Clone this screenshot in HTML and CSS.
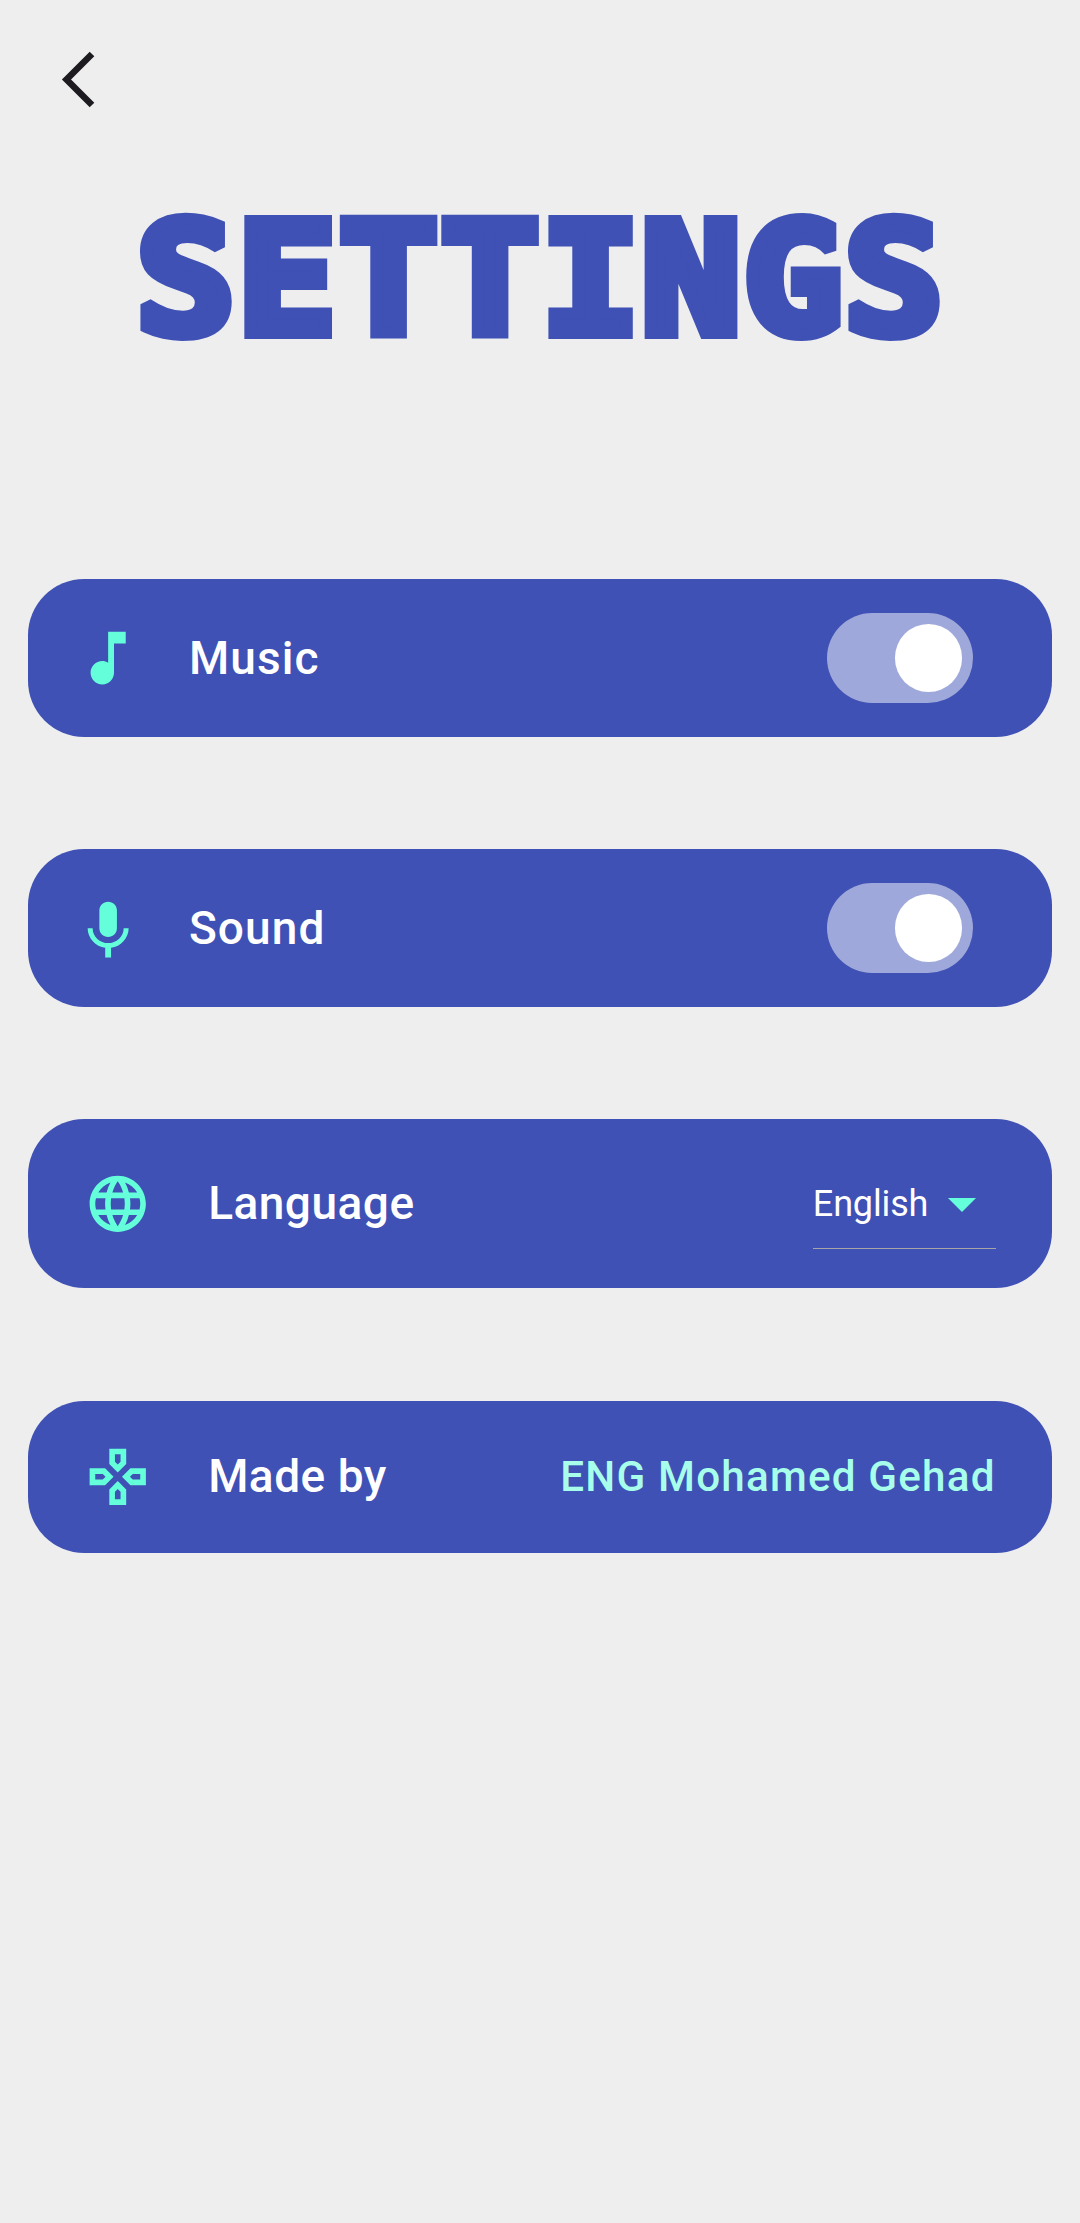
FILE: index.html
```html
<!DOCTYPE html>
<html lang="en">
<head>
<meta charset="utf-8">
<title>Settings</title>
<link rel="stylesheet" href="styles.css">
</head>
<body>
<header class="topbar">
  <svg class="back" viewBox="0 0 34 58" aria-label="Back"><path d="M31 3 5.500 28.500 31 54" /></svg>
</header>
<h1 class="title">
  <svg class="title-art" viewBox="0 0 1080 182"><text transform="scale(1.07 1)" x="173.400 268.200 363.100 458 552 646 741 835.200" y="175">SETTINGS</text></svg>
</h1>
<main class="list">
  <section class="card card-toggle">
    <svg class="icon" viewBox="0 0 24 24"><path d="M12 3v10.550c-.59-.34-1.270-.55-2-.55-2.210 0-4 1.790-4 4s1.790 4 4 4 4-1.790 4-4V7h4V3h-6z"/></svg>
    <span class="label">Music</span>
    <span class="switch"><span class="thumb"></span></span>
  </section>
  <section class="card card-toggle">
    <svg class="icon" viewBox="0 -1 24 24"><path d="M12 14c1.660 0 2.990-1.340 2.990-3L15 5c0-1.660-1.340-3-3-3S9 3.340 9 5v6c0 1.660 1.340 3 3 3zm5.300-3c0 3-2.540 5.100-5.300 5.100S6.700 14 6.700 11H5c0 3.410 2.720 6.230 6 6.720V21h2v-3.280c3.280-.48 6-3.300 6-6.720h-1.700z"/></svg>
    <span class="label">Sound</span>
    <span class="switch"><span class="thumb"></span></span>
  </section>
  <section class="card card-language">
    <svg class="icon" viewBox="0 0 24 24"><path d="M11.990 2C6.470 2 2 6.480 2 12s4.470 10 9.990 10C17.520 22 22 17.520 22 12S17.520 2 11.990 2zm6.930 6h-2.950c-.32-1.250-.78-2.450-1.380-3.560 1.840.63 3.370 1.910 4.330 3.560zM12 4.040c.83 1.200 1.480 2.530 1.910 3.960h-3.820c.43-1.430 1.080-2.760 1.910-3.960zM4.260 14C4.100 13.360 4 12.690 4 12s.1-1.360.26-2h3.380c-.08.66-.14 1.320-.14 2s.06 1.340.14 2H4.260zm.82 2h2.950c.32 1.250.78 2.450 1.380 3.560-1.840-.63-3.370-1.900-4.330-3.560zm2.950-8H5.080c.96-1.660 2.490-2.930 4.330-3.560C8.810 5.550 8.350 6.750 8.030 8zM12 19.960c-.83-1.200-1.480-2.530-1.910-3.960h3.820c-.43 1.430-1.080 2.760-1.910 3.960zM14.340 14H9.660c-.09-.66-.16-1.320-.16-2s.07-1.350.16-2h4.680c.09.65.16 1.320.16 2s-.07 1.340-.16 2zm.25 5.560c.6-1.110 1.060-2.310 1.380-3.560h2.950c-.96 1.650-2.490 2.930-4.330 3.560zM16.360 14c.08-.66.14-1.320.14-2s-.06-1.340-.14-2h3.380c.16.64.26 1.310.26 2s-.1 1.360-.26 2h-3.380z"/></svg>
    <span class="label">Language</span>
    <span class="select">
      <span class="value">English</span>
      <svg class="caret" viewBox="0 0 10 5"><path d="M0 0h10L5 5z"/></svg>
    </span>
  </section>
  <section class="card card-author">
    <svg class="icon" viewBox="0 0 24 24"><path d="M13 4v2.670l-1 1-1-1V4h2m7 7v2h-2.670l-1-1 1-1H20M6.670 11l1 1-1 1H4v-2h2.670M12 16.330l1 1V20h-2v-2.670l1-1M15 2H9v5.500l3 3 3-3V2zm7 7h-5.500l-3 3 3 3H22V9zM7.500 9H2v6h5.500l3-3-3-3zm4.500 4.500l-3 3V22h6v-5.500l-3-3z"/></svg>
    <span class="label">Made by</span>
    <span class="author">ENG Mohamed Gehad</span>
  </section>
</main>
</body>
</html>
```
FILE: styles.css
```css
* { box-sizing: border-box; }
body {
  margin: 0;
  width: 1080px;
  height: 2223px;
  overflow: hidden;
  background: #eeeeee;
  font-family: Roboto, "Liberation Sans", sans-serif;
  color: #ffffff;
}
.topbar { height: 158px; padding: 50.500px 0 0 61px; }
.back { display: block; width: 34px; height: 58px; fill: none; stroke: #1d1b20; stroke-width: 6.500px; }
.title { margin: 0; height: 421.400px; }
.title-art {
  display: block;
  width: 1080px;
  height: 182px;
  overflow: visible;
  fill: #3f51b5;
  stroke: #3f51b5;
  stroke-width: 12px;
  stroke-linejoin: miter;
  stroke-miterlimit: 2;
  text-anchor: middle;
  font-family: "DejaVu Sans Mono", monospace;
  font-weight: 700;
  font-size: 154px;
}
.list { display: flex; flex-direction: column; gap: 112.500px; padding: 0 28.125px; }
.card {
  display: flex;
  align-items: center;
  background: #3f51b5;
  border-radius: 56.250px;
  padding: 0 56.250px;
}
.card-toggle { height: 157.500px; padding: 0 78.500px 0 45px; }
.card-language { height: 168.750px; }
.card-author { height: 151.875px; }
.icon { flex: none; width: 67.500px; height: 67.500px; fill: #64ffda; }
.card-toggle .icon { width: 70.300px; height: 70.300px; }
.label {
  margin-left: 56.250px;
  padding-bottom: 2px;
  font-size: 46px;
  font-weight: 500;
  line-height: 54px;
  letter-spacing: 0.500px;
  white-space: nowrap;
}
.card-toggle .label { margin-left: 45.500px; padding-bottom: 0; letter-spacing: 1.100px; }
.switch {
  display: flex;
  align-items: center;
  justify-content: flex-end;
  margin-left: auto;
  width: 146.250px;
  height: 90px;
  padding-right: 11.250px;
  border-radius: 45px;
  background: #9fa8da;
}
.thumb { width: 67.500px; height: 67.500px; border-radius: 50%; background: #ffffff; }
.select {
  display: flex;
  align-items: center;
  justify-content: space-between;
  margin-left: auto;
  width: 182.800px;
  height: 90px;
  padding: 2px 20px 0 0;
  border-bottom: 1.500px solid #a5a5a9;
}
.value { font-size: 36px; line-height: 42px; letter-spacing: -0.150px; }
.caret { width: 28px; height: 14px; margin-top: 2px; fill: #64ffda; }
.author { margin-left: auto; font-size: 42.200px; font-weight: 500; letter-spacing: 1.200px; color: #a7ffeb; white-space: nowrap; }
```
